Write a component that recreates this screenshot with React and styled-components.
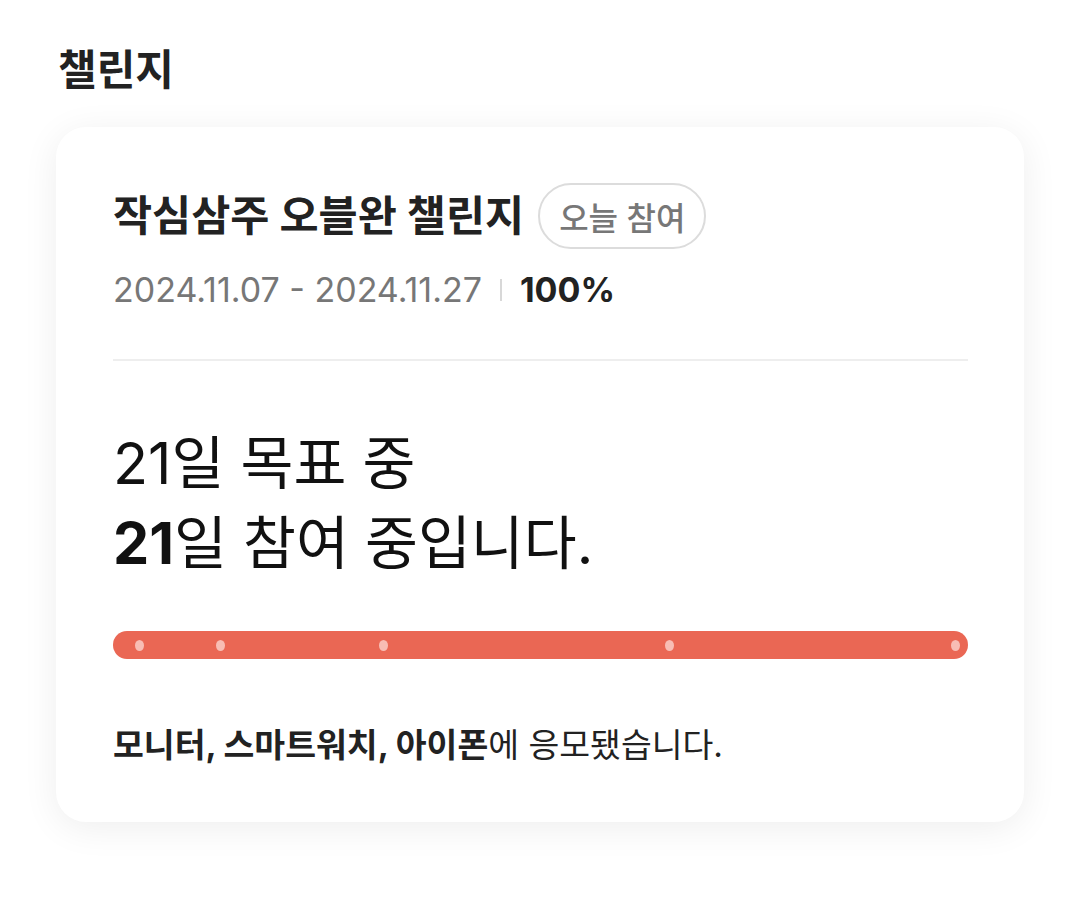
import React from "react";
import styled, { createGlobalStyle } from "styled-components";

const GlobalStyle = createGlobalStyle`
  html, body { margin: 0; padding: 0; background: #ffffff; }
  body { font-family: Inter, "Noto Sans CJK KR", "Noto Sans", sans-serif; color: #222; }
`;

const Page = styled.div`
  padding: 40px 56px 80px;
`;

const Heading = styled.h2`
  margin: 0 0 27px 2px;
  font-size: 42px;
  line-height: 60px;
  font-weight: 700;
  color: #222;
`;

const Card = styled.section`
  background: #fff;
  border-radius: 30px;
  box-shadow: 0 6px 36px rgba(0, 0, 0, 0.07);
  padding: 56px 56px 53px 57px;
`;

const TitleRow = styled.div`
  display: flex;
  align-items: center;
  gap: 14px;
`;

const Title = styled.h3`
  margin: 0;
  font-size: 42.5px;
  font-weight: 700;
  color: #222;
  line-height: 66px;
`;

const Chip = styled.span`
  display: inline-flex;
  align-items: center;
  height: 66px;
  box-sizing: border-box;
  padding: 0 19px;
  border: 2px solid #dcdcdc;
  border-radius: 33px;
  font-size: 32px;
  color: #777;
  font-weight: 500;
`;

const MetaRow = styled.div`
  display: flex;
  align-items: center;
  margin-top: 17px;
  font-size: 34px;
  line-height: 48px;
`;

const Dates = styled.span`
  color: #777;
`;

const Sep = styled.span`
  width: 2px;
  height: 22px;
  background: #d8d8d8;
  margin: 0 18px;
`;

const Percent = styled.span`
  font-weight: 700;
  color: #222;
`;

const Divider = styled.hr`
  border: 0;
  height: 2px;
  background: #eeeeee;
  margin: 45px 0 0;
`;

const Big = styled.p`
  margin: 62px 0 0;
  font-size: 57.5px;
  line-height: 80px;
  color: #111;
  strong { font-weight: 700; }
`;

const Bar = styled.div`
  position: relative;
  height: 28px;
  border-radius: 14px;
  background: #ea6754;
  margin-top: 48px;
`;

const Dot = styled.span`
  position: absolute;
  top: 50%;
  width: 9px;
  height: 11px;
  margin: -5px 0 0 -4px;
  border-radius: 50%;
  background: #f8bdb4;
`;

const Footer = styled.p`
  margin: 62px 0 0;
  font-size: 33.5px;
  line-height: 48px;
  color: #222;
  strong { font-weight: 700; }
`;

const dots = [26, 107, 270, 556, 842];

export default function App() {
  return (
    <>
      <GlobalStyle />
      <Page>
        <Heading>챌린지</Heading>
        <Card>
          <TitleRow>
            <Title>작심삼주 오블완 챌린지</Title>
            <Chip>오늘 참여</Chip>
          </TitleRow>
          <MetaRow>
            <Dates>2024.11.07 - 2024.11.27</Dates>
            <Sep />
            <Percent>100%</Percent>
          </MetaRow>
          <Divider />
          <Big>
            21일 목표 중
            <br />
            <strong>21</strong>일 참여 중입니다.
          </Big>
          <Bar>
            {dots.map((x) => (
              <Dot key={x} style={{ left: `${(x / 855) * 100}%` }} />
            ))}
          </Bar>
          <Footer>
            <strong>모니터, 스마트워치, 아이폰</strong>에 응모됐습니다.
          </Footer>
        </Card>
      </Page>
    </>
  );
}
